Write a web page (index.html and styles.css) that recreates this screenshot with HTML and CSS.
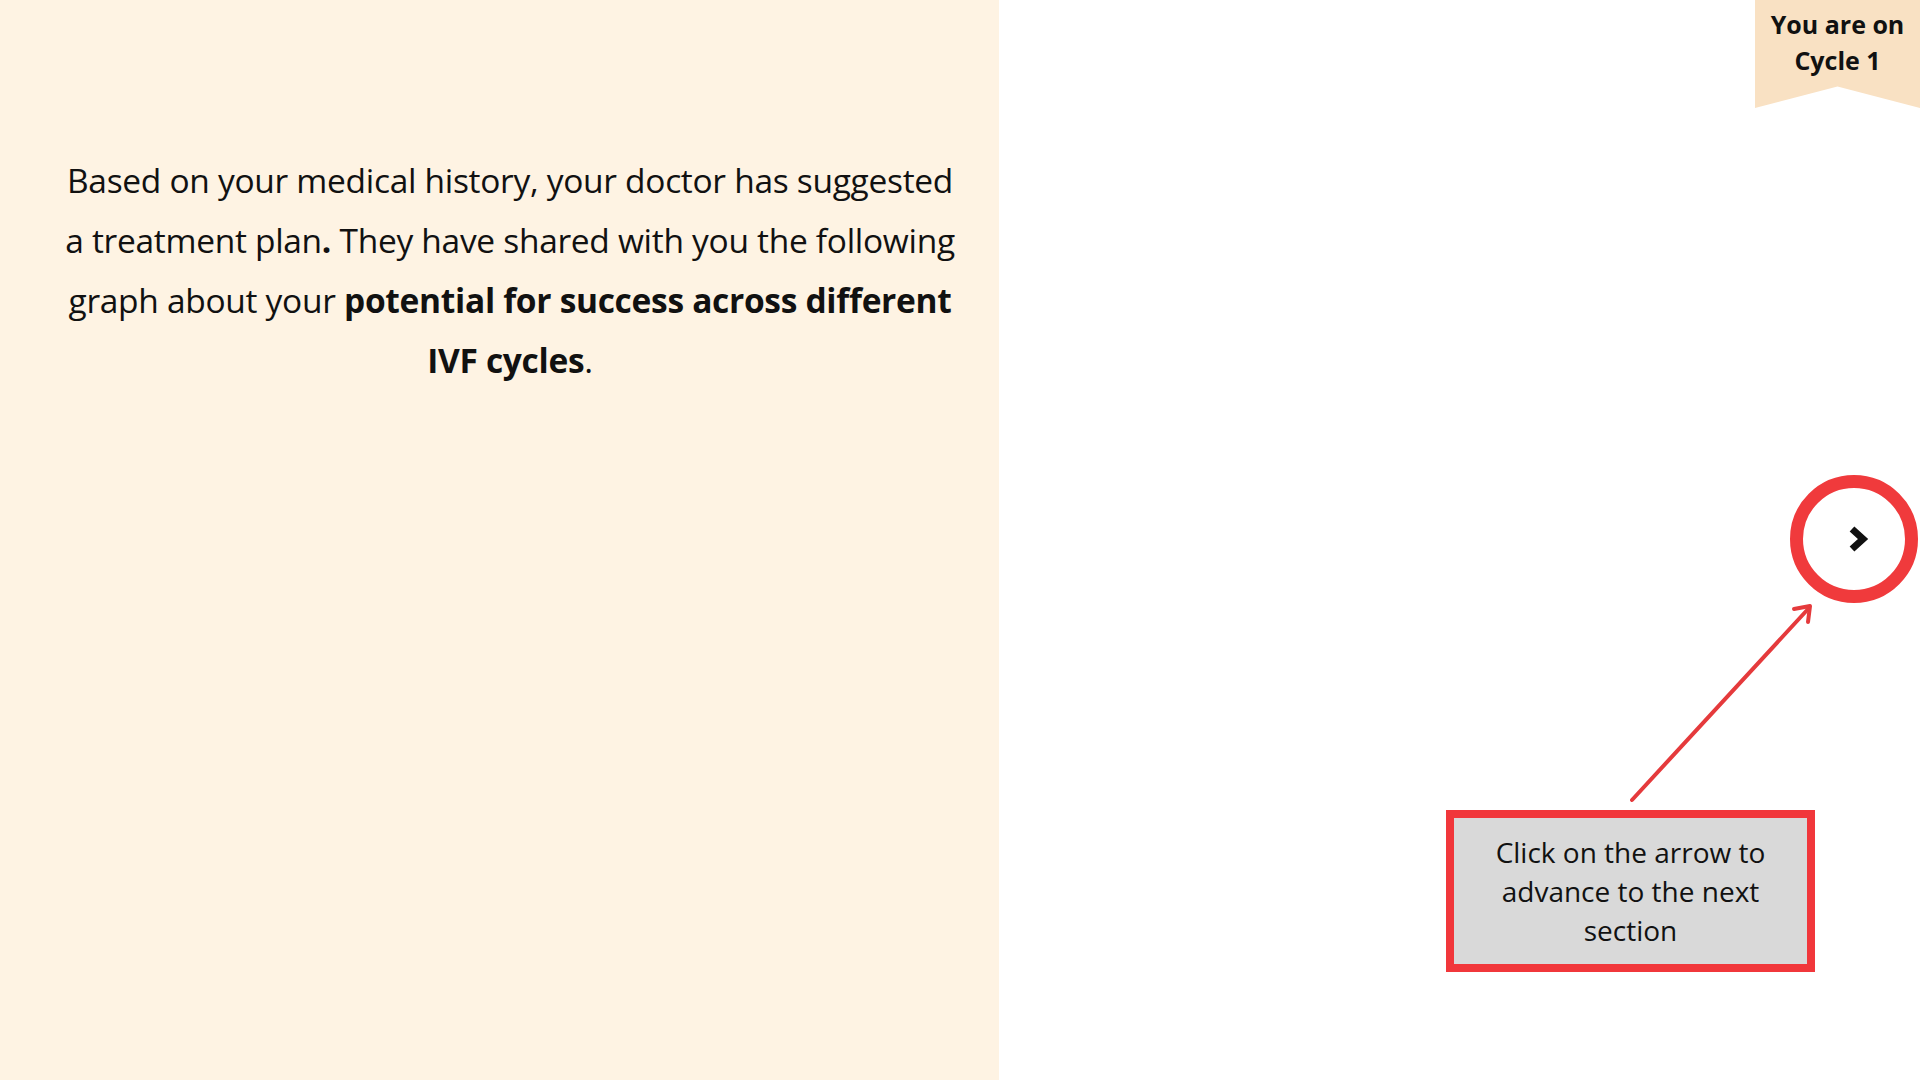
FILE: index.html
```html
<!DOCTYPE html>
<html lang="en">
<head>
<meta charset="utf-8">
<title>Cycle 1</title>
<link rel="stylesheet" href="styles.css">
</head>
<body>
<div class="page">
  <section class="intro">
    <p class="intro-text">Based on your medical history, your doctor has suggested a treatment plan<b>.</b> They have shared with you the following graph about your <b>potential for success across different IVF cycles</b>.</p>
  </section>
  <section class="stage">
    <div class="badge">You are on<br>Cycle 1</div>
    <button class="next" aria-label="Next">
      <svg width="22" height="28" viewBox="0 0 22 28"><path d="M5 4 L16 14 L5 24" fill="none" stroke="#111" stroke-width="7" stroke-linejoin="miter" stroke-linecap="butt"/></svg>
    </button>
    <svg class="pointer" width="1920" height="1080" viewBox="0 0 1920 1080">
      <line x1="1632" y1="800" x2="1809" y2="608" stroke="#e53a3c" stroke-width="4" stroke-linecap="round"/>
      <path d="M1794 609 L1810 606 L1808 622" fill="none" stroke="#e53a3c" stroke-width="4" stroke-linecap="round" stroke-linejoin="round"/>
    </svg>
    <div class="hint">Click on the arrow to advance to the next section</div>
  </section>
</div>
</body>
</html>
```
FILE: styles.css
```css
* { box-sizing: border-box; }
html, body { margin: 0; padding: 0; }
body {
  width: 1920px;
  height: 1080px;
  overflow: hidden;
  background: #ffffff;
  font-family: "Open Sans", "Noto Sans", sans-serif;
  color: #111;
}
.page {
  display: flex;
  width: 1920px;
  height: 1080px;
}
.intro {
  width: 999px;
  flex: none;
  background: #fef3e3;
  padding: 150px 39px 0 60px;
}
.intro-text {
  margin: 0;
  text-align: center;
  font-size: 33.5px;
  line-height: 60px;
  letter-spacing: -0.3px;
}
.intro-text b { font-weight: 700; }
.stage {
  flex: 1;
  position: relative;
}
.badge {
  position: absolute;
  top: 0;
  right: 0;
  width: 165px;
  height: 108px;
  background: #f9e1c3;
  clip-path: polygon(0 0, 100% 0, 100% 100%, 50% 80%, 0 100%);
  text-align: center;
  font-weight: 700;
  font-size: 25px;
  line-height: 36px;
  padding-top: 6px;
}
.next {
  position: absolute;
  left: 791px;
  top: 475px;
  width: 128px;
  height: 128px;
  border-radius: 50%;
  border: 13px solid #f03a3c;
  background: #fff;
  padding: 0;
  display: flex;
  align-items: center;
  justify-content: center;
}
.next svg { margin-left: 8px; }
.pointer {
  position: absolute;
  left: -999px;
  top: 0;
  pointer-events: none;
}
.hint {
  position: absolute;
  left: 447px;
  top: 810px;
  width: 369px;
  height: 162px;
  background: #d9d9d9;
  border: 8px solid #f1373b;
  display: flex;
  align-items: center;
  justify-content: center;
  text-align: center;
  font-size: 28px;
  line-height: 39px;
  padding: 0 14px;
}
```
